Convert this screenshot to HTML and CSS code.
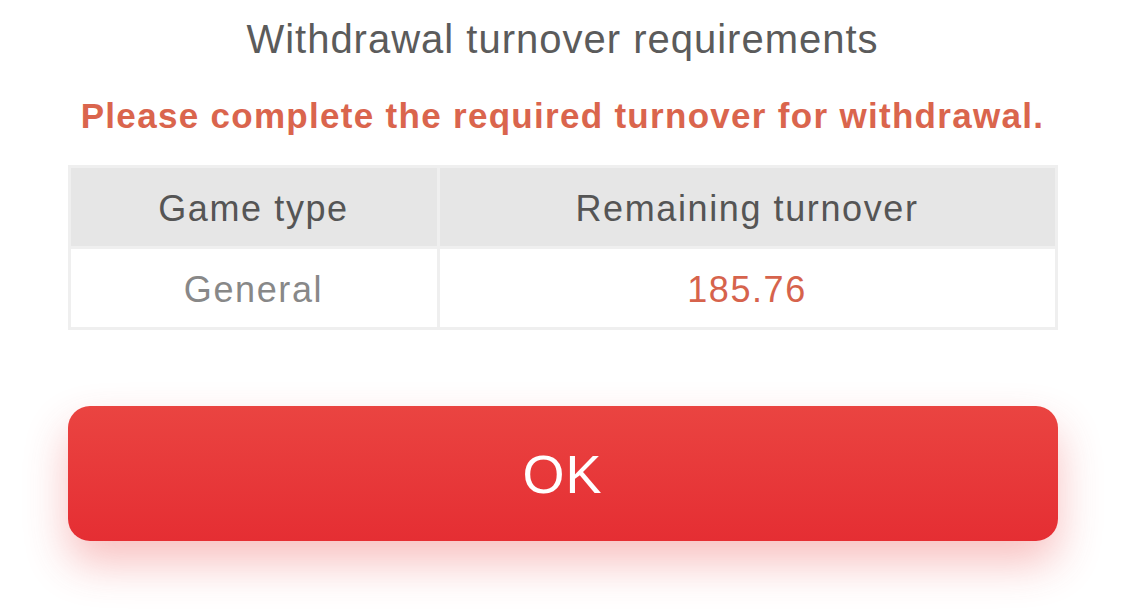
FILE: index.html
```html
<!DOCTYPE html>
<html lang="en">
<head>
  <meta charset="UTF-8" />
  <meta name="viewport" content="width=device-width, initial-scale=1.0" />
  <title>Withdrawal turnover requirements</title>
  <link rel="stylesheet" href="styles.css">
</head>
<body>
  <div class="dialog">
    <h2 class="title">Withdrawal turnover requirements</h2>
    <p class="notice">Please complete the required turnover for withdrawal.</p>

    <table class="turnover">
      <thead>
        <tr><th class="col-type">Game type</th><th>Remaining turnover</th></tr>
      </thead>
      <tbody>
        <tr><td class="type">General</td><td class="amount">185.76</td></tr>
      </tbody>
    </table>

    <button class="ok-btn">OK</button>
  </div>
</body>
</html>
```

FILE: styles.css
```css
body {
  margin: 0;
  min-height: 616px;
  font-family: "Liberation Sans", Arial, sans-serif;
  background: #fff;
  color: #555;
}
.dialog {
  width: 990px;
  margin: 0 auto;
  padding: 16px 0 76px;
  display: flex;
  flex-direction: column;
  align-items: stretch;
}
.title {
  margin: 0;
  text-align: center;
  font-weight: normal;
  font-size: 40px;
  letter-spacing: 1px;
  line-height: 46px;
  color: #5b5b5b;
}
.notice {
  margin: 34px 0 0;
  text-align: center;
  font-weight: bold;
  font-size: 35px;
  letter-spacing: 1.3px;
  line-height: 40px;
  color: #da654d;
}
.turnover {
  margin-top: 29px;
  width: 100%;
  border-collapse: collapse;
  border: 2px solid #efefef;
}
.turnover th, .turnover td {
  border: 3px solid #efefef;
  text-align: center;
  font-size: 36px;
  letter-spacing: 1.6px;
  height: 74px;
  padding: 4px 0 0;
}
.turnover th {
  background: #e6e6e6;
  font-weight: normal;
  color: #555;
}
.col-type {
  width: 366px;
}
.type {
  color: #888;
}
.amount {
  color: #d6634c;
}
.ok-btn {
  margin-top: 76px;
  height: 135px;
  border: none;
  border-radius: 22px;
  background: linear-gradient(#ea4441, #e52e33);
  color: #fff;
  font-family: "Liberation Sans", Arial, sans-serif;
  font-size: 54px;
  letter-spacing: 1px;
  box-shadow: 0 22px 44px rgba(234, 60, 60, 0.32);
  cursor: pointer;
}
```
